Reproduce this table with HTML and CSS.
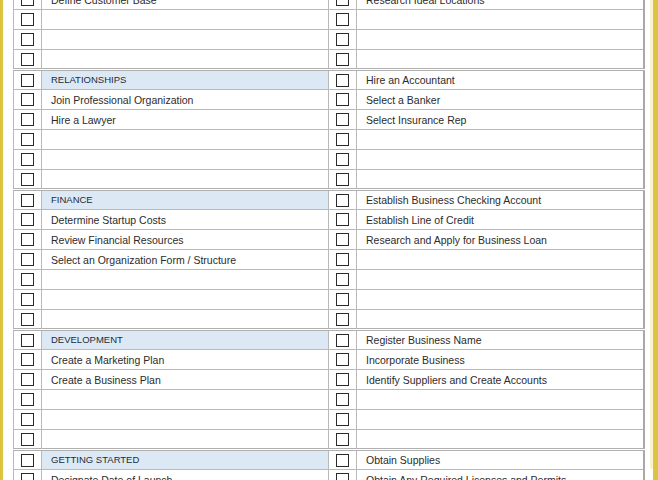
FILE: index.html
```html
<!DOCTYPE html>
<html>
<head>
<meta charset="utf-8">
<link rel="stylesheet" href="styles.css">
</head>
<body>
<div class="page">
  <div class="inner">
    <table class="list">
      <colgroup><col class="c-box"><col class="c-label"><col class="c-box"><col class="c-label-r"></colgroup>
      <tbody>
        <tr><td class="box"><span></span></td><td>Define Customer Base</td><td class="box"><span></span></td><td>Research Ideal Locations</td></tr>
        <tr><td class="box"><span></span></td><td></td><td class="box"><span></span></td><td></td></tr>
        <tr><td class="box"><span></span></td><td></td><td class="box"><span></span></td><td></td></tr>
        <tr><td class="box"><span></span></td><td></td><td class="box"><span></span></td><td></td></tr>
      </tbody>
      <tbody class="section">
        <tr><td class="box"><span></span></td><td class="head">RELATIONSHIPS</td><td class="box"><span></span></td><td>Hire an Accountant</td></tr>
        <tr><td class="box"><span></span></td><td>Join Professional Organization</td><td class="box"><span></span></td><td>Select a Banker</td></tr>
        <tr><td class="box"><span></span></td><td>Hire a Lawyer</td><td class="box"><span></span></td><td>Select Insurance Rep</td></tr>
        <tr><td class="box"><span></span></td><td></td><td class="box"><span></span></td><td></td></tr>
        <tr><td class="box"><span></span></td><td></td><td class="box"><span></span></td><td></td></tr>
        <tr><td class="box"><span></span></td><td></td><td class="box"><span></span></td><td></td></tr>
      </tbody>
      <tbody class="section">
        <tr><td class="box"><span></span></td><td class="head">FINANCE</td><td class="box"><span></span></td><td>Establish Business Checking Account</td></tr>
        <tr><td class="box"><span></span></td><td>Determine Startup Costs</td><td class="box"><span></span></td><td>Establish Line of Credit</td></tr>
        <tr><td class="box"><span></span></td><td>Review Financial Resources</td><td class="box"><span></span></td><td>Research and Apply for Business Loan</td></tr>
        <tr><td class="box"><span></span></td><td>Select an Organization Form / Structure</td><td class="box"><span></span></td><td></td></tr>
        <tr><td class="box"><span></span></td><td></td><td class="box"><span></span></td><td></td></tr>
        <tr><td class="box"><span></span></td><td></td><td class="box"><span></span></td><td></td></tr>
        <tr><td class="box"><span></span></td><td></td><td class="box"><span></span></td><td></td></tr>
      </tbody>
      <tbody class="section">
        <tr><td class="box"><span></span></td><td class="head">DEVELOPMENT</td><td class="box"><span></span></td><td>Register Business Name</td></tr>
        <tr><td class="box"><span></span></td><td>Create a Marketing Plan</td><td class="box"><span></span></td><td>Incorporate Business</td></tr>
        <tr><td class="box"><span></span></td><td>Create a Business Plan</td><td class="box"><span></span></td><td>Identify Suppliers and Create Accounts</td></tr>
        <tr><td class="box"><span></span></td><td></td><td class="box"><span></span></td><td></td></tr>
        <tr><td class="box"><span></span></td><td></td><td class="box"><span></span></td><td></td></tr>
        <tr><td class="box"><span></span></td><td></td><td class="box"><span></span></td><td></td></tr>
      </tbody>
      <tbody class="section">
        <tr><td class="box"><span></span></td><td class="head">GETTING STARTED</td><td class="box"><span></span></td><td>Obtain Supplies</td></tr>
        <tr><td class="box"><span></span></td><td>Designate Date of Launch</td><td class="box"><span></span></td><td>Obtain Any Required Licenses and Permits</td></tr>
      </tbody>
    </table>
  </div>
</div>
</body>
</html>
```
FILE: styles.css
```css
html, body {
  margin: 0;
  padding: 0;
  background: #ffffff;
}
body {
  font-family: "Liberation Sans", Arial, sans-serif;
  font-size: 10.5px;
  color: #2b2b2b;
}
.page {
  width: 658px;
  height: 480px;
  box-sizing: border-box;
  overflow: hidden;
  border-left: 3px solid #dcc440;
  border-right: 5px solid #dcc440;
  padding-left: 10px;
}
.inner {
  height: 100%;
  box-sizing: border-box;
  border-right: 3px solid #faf3cf;
  padding-right: 7px;
}
.list {
  border-collapse: collapse;
  table-layout: fixed;
  width: 630px;
  margin-top: -11px;
  border-right: 2px solid #a9a9a9;
}
.c-box { width: 28px; }
.c-label { width: 287px; }
.c-label-r { width: 287px; }
.list td {
  height: 20px;
  padding: 0 0 0 9px;
  box-sizing: border-box;
  border: 1px solid #b9b9b9;
  vertical-align: middle;
  white-space: nowrap;
  overflow: hidden;
  line-height: 12px;
}
.list td.box {
  padding: 0;
  text-align: center;
}
.box span {
  display: inline-block;
  width: 13px;
  height: 13px;
  box-sizing: border-box;
  border: 1.5px solid #2a2a2a;
  vertical-align: middle;
}
.section tr:first-child td {
  border-top: 3px double #b0b0b0;
}
.list td.head {
  background: #dce9f4;
  color: #1c2b3c;
  font-size: 9.5px;
}
```
